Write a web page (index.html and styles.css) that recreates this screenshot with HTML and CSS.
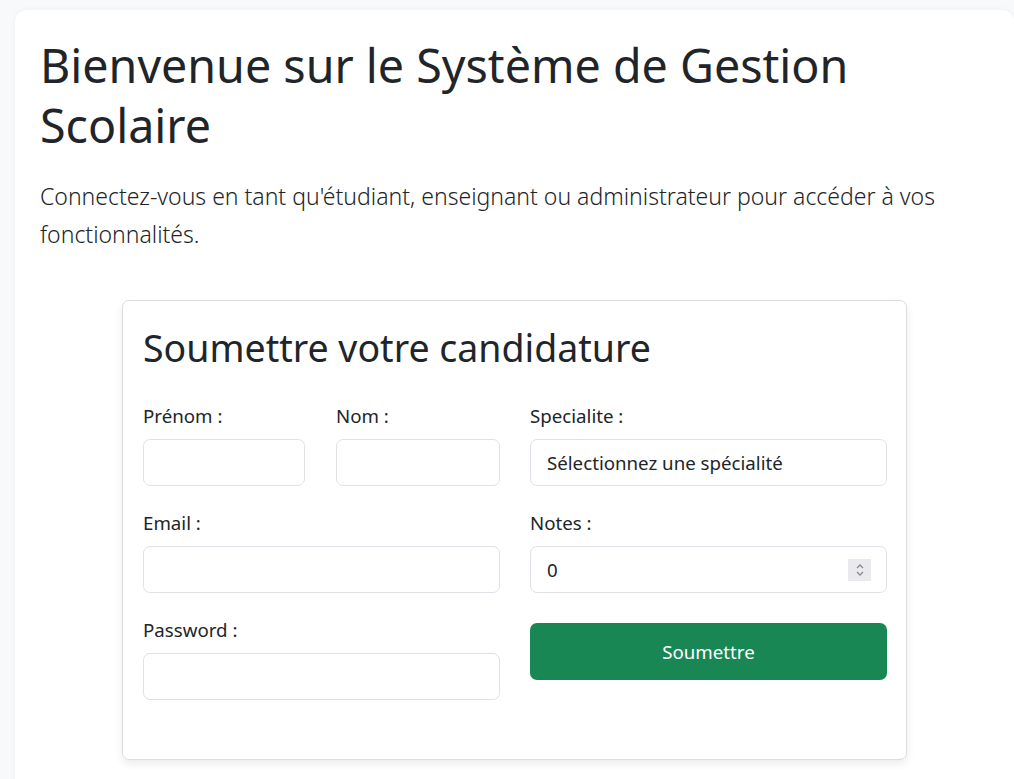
FILE: index.html
```html
<!DOCTYPE html>
<html lang="fr">
<head>
<meta charset="utf-8">
<title>Système de Gestion Scolaire</title>
<link rel="stylesheet" href="styles.css">
</head>
<body>
<main class="page">
  <h1 class="hero-title">Bienvenue sur le Système de Gestion Scolaire</h1>
  <p class="lead">Connectez-vous en tant qu'étudiant, enseignant ou administrateur pour accéder à vos fonctionnalités.</p>

  <section class="card">
    <h2 class="card-title">Soumettre votre candidature</h2>
    <form class="form-grid">
      <div class="col">
        <div class="pair">
          <div class="group">
            <label class="label">Prénom :</label>
            <div class="input"></div>
          </div>
          <div class="group">
            <label class="label">Nom :</label>
            <div class="input"></div>
          </div>
        </div>
        <div class="group">
          <label class="label">Email :</label>
          <div class="input"></div>
        </div>
        <div class="group">
          <label class="label">Password :</label>
          <div class="input"></div>
        </div>
      </div>
      <div class="col">
        <div class="group">
          <label class="label">Specialite :</label>
          <div class="input select">Sélectionnez une spécialité</div>
        </div>
        <div class="group">
          <label class="label">Notes :</label>
          <div class="input number">0
            <span class="spin">
              <svg width="10" height="16" viewBox="0 0 10 16"><path d="M2 6 L5 3 L8 6" fill="none" stroke="#8a8a90" stroke-width="1.3"/><path d="M2 10 L5 13 L8 10" fill="none" stroke="#8a8a90" stroke-width="1.3"/></svg>
            </span>
          </div>
        </div>
        <button type="button" class="btn">Soumettre</button>
      </div>
    </form>
  </section>
</main>
</body>
</html>
```

FILE: styles.css
```css
* { box-sizing: border-box; }
html, body { margin: 0; padding: 0; }
body {
  background: #f8f9fa;
  font-family: "Noto Sans", "Open Sans", sans-serif;
  color: #212529;
  padding: 10px 0 0 15px;
}
.page {
  background: #fff;
  border-radius: 12px;
  box-shadow: 0 0 6px rgba(0,0,0,0.04);
  padding: 25px 25px 40px;
  min-height: 800px;
}
.hero-title {
  margin: 0 0 22px;
  font-size: 46.6px;
  font-weight: 400;
  line-height: 60px;
}
.lead {
  margin: 0 0 47px;
  font-size: 23px;
  font-weight: 300;
  line-height: 38px;
}
.card {
  width: 785px;
  margin: 0 auto;
  border: 1px solid #dcdde1;
  border-radius: 7px;
  box-shadow: 0 4px 8px rgba(0,0,0,0.08);
  padding: 24px 20px 37px;
}
.card-title {
  margin: 0 0 31px;
  font-size: 37.5px;
  font-weight: 400;
  line-height: 45px;
}
.form-grid {
  display: grid;
  grid-template-columns: 357px 357px;
  column-gap: 30px;
}
.pair {
  display: grid;
  grid-template-columns: 162px 164px;
  column-gap: 31px;
}
.group { margin-bottom: 22px; }
.label {
  display: block;
  font-size: 18.7px;
  line-height: 30px;
  margin-bottom: 8px;
}
.input {
  height: 47px;
  border: 1px solid #dee2e6;
  border-radius: 7px;
  padding: 0 16px;
  display: flex;
  align-items: center;
  font-size: 18.7px;
  position: relative;
}
.spin {
  position: absolute;
  right: 15px;
  top: 12px;
  width: 23px;
  height: 22px;
  background: #e9e9ee;
  display: flex;
  align-items: center;
  justify-content: center;
}
.btn {
  display: block;
  width: 100%;
  height: 57px;
  margin-top: 30px;
  border: none;
  border-radius: 7px;
  background: #198754;
  color: #fff;
  font-family: inherit;
  font-size: 18.7px;
}
```
